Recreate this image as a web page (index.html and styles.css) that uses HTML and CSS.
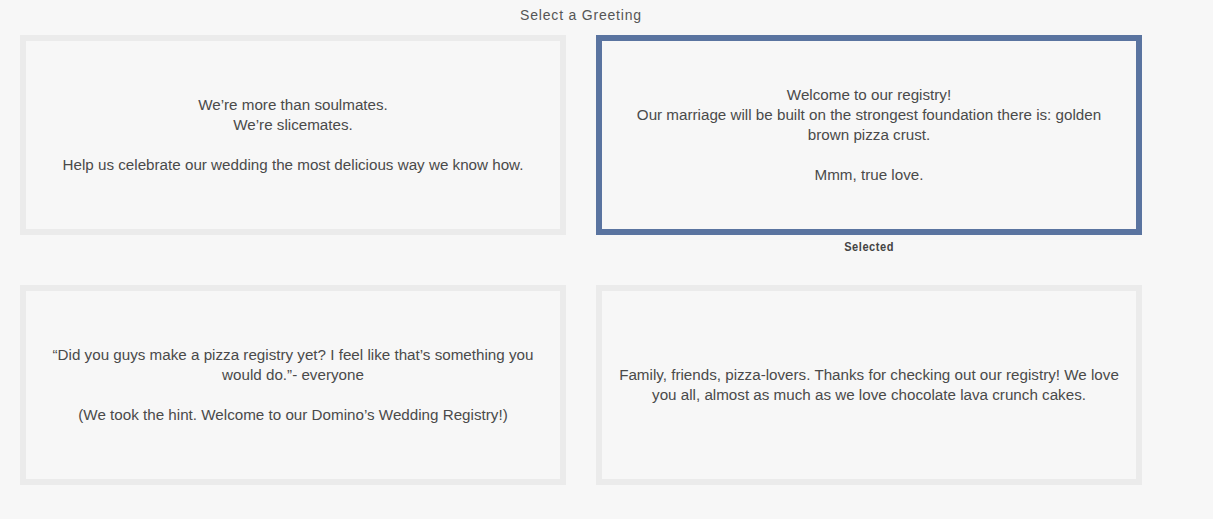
FILE: index.html
```html
<!DOCTYPE html>
<html>
<head>
<meta charset="utf-8">
<link rel="stylesheet" href="styles.css">
</head>
<body>
<div class="page">
  <h2 class="title">Select a Greeting</h2>
  <div class="grid">
    <div class="cell">
      <div class="card"><p>We’re more than soulmates.<br>We’re slicemates.<br><br>Help us celebrate our wedding the most delicious way we know how.</p></div>
    </div>
    <div class="cell">
      <div class="card selected"><p>Welcome to our registry!<br>Our marriage will be built on the strongest foundation there is: golden brown pizza crust.<br><br>Mmm, true love.</p></div>
      <div class="label">Selected</div>
    </div>
    <div class="cell">
      <div class="card"><p>“Did you guys make a pizza registry yet? I feel like that’s something you would do.”- everyone<br><br>(We took the hint. Welcome to our Domino’s Wedding Registry!)</p></div>
    </div>
    <div class="cell">
      <div class="card"><p>Family, friends, pizza-lovers. Thanks for checking out our registry! We love you all, almost as much as we love chocolate lava crunch cakes.</p></div>
    </div>
  </div>
</div>
</body>
</html>
```
FILE: styles.css
```css
html, body {
  margin: 0;
  padding: 0;
  background: #f7f7f7;
}
body {
  font-family: "Liberation Sans", Arial, sans-serif;
  color: #4a4a4a;
}
.page {
  width: 1122px;
  margin-left: 20px;
}
.title {
  margin: 0;
  padding-top: 6px;
  height: 29px;
  text-align: center;
  font-size: 14px;
  font-weight: normal;
  letter-spacing: 0.8px;
  line-height: 18px;
  color: #555;
}
.grid {
  display: grid;
  grid-template-columns: 546px 546px;
  column-gap: 30px;
  row-gap: 0;
}
.cell {
  height: 250px;
  display: flex;
  flex-direction: column;
  align-items: center;
}
.card {
  box-sizing: border-box;
  width: 546px;
  height: 200px;
  border: 6px solid #ebebeb;
  background: #f7f7f7;
  display: flex;
  align-items: center;
  justify-content: center;
  padding: 0 14px;
}
.card.selected {
  border-color: #5a74a0;
}
.card p {
  margin: 0;
  text-align: center;
  font-size: 15.2px;
  line-height: 20px;
  color: #4a4a4a;
}
.label {
  margin-top: 5px;
  font-size: 12px;
  font-weight: bold;
  letter-spacing: 0.6px;
  color: #444;
  transform: scaleX(0.92);
}
```
